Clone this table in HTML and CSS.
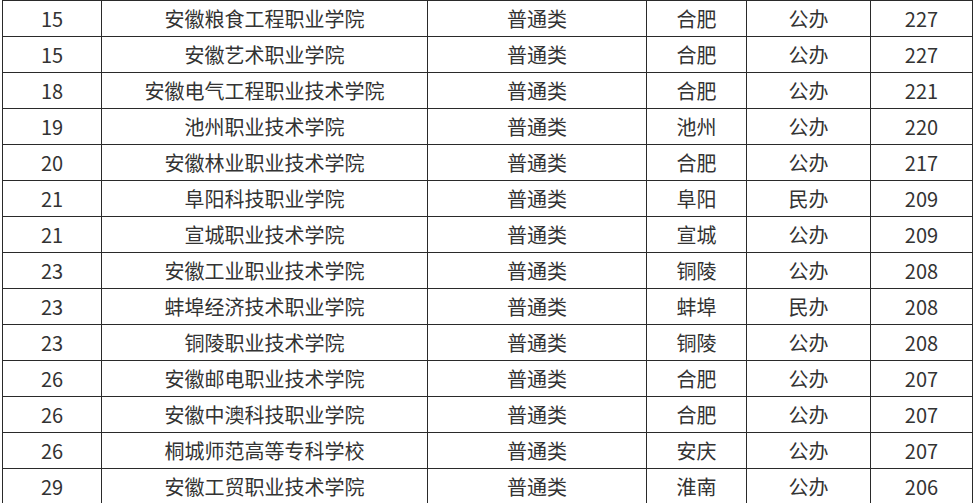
FILE: index.html
```html
<!DOCTYPE html>
<html lang="zh-CN">
<head>
<meta charset="utf-8">
<title>安徽高职院校排名</title>
<link rel="stylesheet" href="styles.css">
</head>
<body>
<table class="rank">
<colgroup>
<col class="c1"><col class="c2"><col class="c3"><col class="c4"><col class="c5"><col class="c6">
</colgroup>
<tbody>
<tr><td>15</td><td>安徽粮食工程职业学院</td><td>普通类</td><td>合肥</td><td>公办</td><td>227</td></tr>
<tr><td>15</td><td>安徽艺术职业学院</td><td>普通类</td><td>合肥</td><td>公办</td><td>227</td></tr>
<tr><td>18</td><td>安徽电气工程职业技术学院</td><td>普通类</td><td>合肥</td><td>公办</td><td>221</td></tr>
<tr><td>19</td><td>池州职业技术学院</td><td>普通类</td><td>池州</td><td>公办</td><td>220</td></tr>
<tr><td>20</td><td>安徽林业职业技术学院</td><td>普通类</td><td>合肥</td><td>公办</td><td>217</td></tr>
<tr><td>21</td><td>阜阳科技职业学院</td><td>普通类</td><td>阜阳</td><td>民办</td><td>209</td></tr>
<tr><td>21</td><td>宣城职业技术学院</td><td>普通类</td><td>宣城</td><td>公办</td><td>209</td></tr>
<tr><td>23</td><td>安徽工业职业技术学院</td><td>普通类</td><td>铜陵</td><td>公办</td><td>208</td></tr>
<tr><td>23</td><td>蚌埠经济技术职业学院</td><td>普通类</td><td>蚌埠</td><td>民办</td><td>208</td></tr>
<tr><td>23</td><td>铜陵职业技术学院</td><td>普通类</td><td>铜陵</td><td>公办</td><td>208</td></tr>
<tr><td>26</td><td>安徽邮电职业技术学院</td><td>普通类</td><td>合肥</td><td>公办</td><td>207</td></tr>
<tr><td>26</td><td>安徽中澳科技职业学院</td><td>普通类</td><td>合肥</td><td>公办</td><td>207</td></tr>
<tr><td>26</td><td>桐城师范高等专科学校</td><td>普通类</td><td>安庆</td><td>公办</td><td>207</td></tr>
<tr><td>29</td><td>安徽工贸职业技术学院</td><td>普通类</td><td>淮南</td><td>公办</td><td>206</td></tr>
</tbody>
</table>
</body>
</html>
```
FILE: styles.css
```css
html, body {
  margin: 0;
  padding: 0;
  background: #ffffff;
  overflow: hidden;
}
body {
  font-family: "Noto Sans CJK SC", "Noto Sans", sans-serif;
  color: #333333;
}
.rank {
  margin-left: 2px;
  border-collapse: collapse;
  table-layout: fixed;
  width: 970px;
}
.rank .c1 { width: 99px; }
.rank .c2 { width: 326px; }
.rank .c3 { width: 219px; }
.rank .c4 { width: 100px; }
.rank .c5 { width: 124px; }
.rank .c6 { width: 102px; }
.rank td {
  border: 1px solid #2a2a2a;
  height: 36px;
  padding: 0;
  box-sizing: border-box;
  text-align: center;
  vertical-align: middle;
  font-size: 20px;
  line-height: 34px;
  white-space: nowrap;
}
```
